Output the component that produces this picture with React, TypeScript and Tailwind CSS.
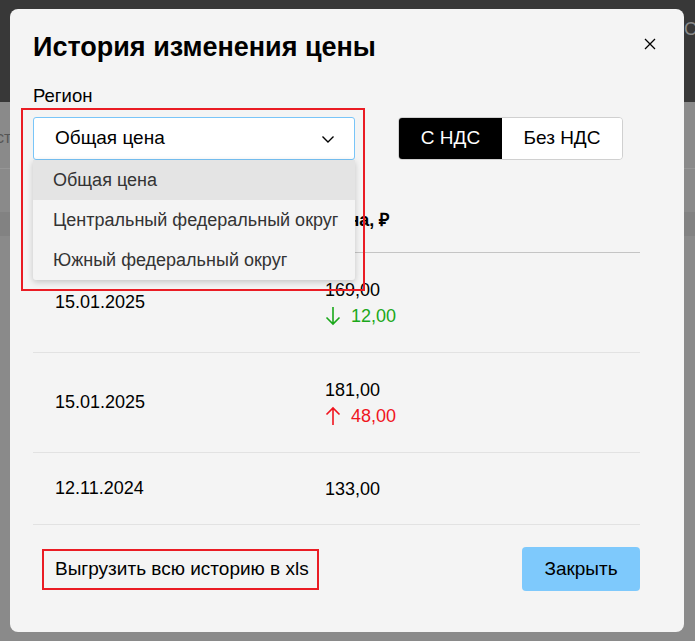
import React from 'react';

const rows = [
  { date: '15.01.2025', price: '169,00', diff: '12,00', dir: 'down' },
  { date: '15.01.2025', price: '181,00', diff: '48,00', dir: 'up' },
  { date: '12.11.2024', price: '133,00' },
];

const regions = ['Общая цена', 'Центральный федеральный округ', 'Южный федеральный округ'];

const Chevron = () => (
  <svg width="16" height="16" viewBox="0 0 16 16" fill="none" stroke="#000" strokeWidth="1.4">
    <path d="M2.5 5.5 8 11l5.5-5.5" />
  </svg>
);

const Arrow = ({ up }: { up: boolean }) => (
  <svg width="16" height="20" viewBox="0 0 16 20" fill="none" stroke="currentColor" strokeWidth="1.6">
    {up ? <path d="M8 19V2M1.5 8.5 8 2l6.5 6.5" /> : <path d="M8 1v17M1.5 11.5 8 18l6.5-6.5" />}
  </svg>
);

const Backdrop = () => (
  <div className="absolute inset-0 flex flex-col">
    <div className="h-[102px] bg-[#383838] relative">
      <span className="absolute left-[684px] top-[16px] text-[18px] text-[#8a8a8a]">С</span>
    </div>
    <div className="flex-1 bg-[#8a8a8a] relative">
      <span className="absolute left-[-4px] top-[24px] text-[16px] text-[#555]">ст</span>
      <div className="absolute left-0 right-0 top-[66px] h-px bg-[#969696]" />
      <div className="absolute left-0 right-0 top-[110px] h-[24px] bg-[#828282]" />
    </div>
  </div>
);

export default function App() {
  return (
    <div className="relative w-[695px] h-[641px] overflow-hidden font-['Liberation_Sans',Arial,sans-serif] text-black">
      <Backdrop />
      <div className="absolute left-[10px] top-[9px] w-[674px] h-[623px] bg-[#f4f4f4] rounded-[8px] pl-[23px] pr-[44px] pt-[22px]">
        <button className="absolute right-[26px] top-[27px] w-[16px] h-[16px] flex items-center justify-center">
          <svg width="12" height="12" viewBox="0 0 12 12" stroke="#000" strokeWidth="1.3">
            <path d="M1 1l10 10M11 1 1 11" />
          </svg>
        </button>
        <h1 className="text-[27px] font-bold leading-[32px]">История изменения цены</h1>
        <div className="mt-[23px] text-[18.5px] leading-[20px]">Регион</div>
        <div className="mt-[11px] flex items-center">
          <div className="relative w-[322px]">
            <div className="h-[43px] bg-white border border-[#79c5f8] rounded-[3px] flex items-center justify-between pl-[21px] pr-[18px] text-[19px]">
              <span>Общая цена</span>
              <Chevron />
            </div>
            <div className="absolute left-0 right-0 top-[43px] bg-[#f4f4f4] shadow-[0_2px_6px_rgba(0,0,0,0.2)] rounded-b-[3px] z-10">
              {regions.map((r, i) => (
                <div key={r} className={`h-[40px] flex items-center pl-[20px] text-[18px] text-[#333] ${i === 0 ? 'bg-[#e4e4e4]' : ''}`}>
                  {r}
                </div>
              ))}
            </div>
            <div className="absolute left-[-12px] top-[-9px] w-[344px] h-[183px] border-2 border-[#ea1c24] z-20 pointer-events-none" />
          </div>
          <div className="ml-[43px] flex h-[43px] rounded-[4px] overflow-hidden border border-[#d0d0d0] text-[19px]">
            <div className="w-[103px] bg-black text-white flex items-center justify-center">С НДС</div>
            <div className="w-[120px] bg-white flex items-center justify-center">Без НДС</div>
          </div>
        </div>
        <div className="mt-[29px]">
          <div className="h-[64px] flex items-center border-b border-[#c4c4c4] text-[18px] font-bold">
            <div className="w-[292px] pl-[22px]">Дата</div>
            <div>Цена, ₽</div>
          </div>
          {rows.map((r, i) => (
            <div key={i} className={`flex items-center border-b border-[#e2e2e2] text-[18px] ${r.diff ? 'h-[100px]' : 'h-[72px]'}`}>
              <div className="w-[292px] pl-[22px]">{r.date}</div>
              <div className="flex flex-col gap-[4px]">
                <span className="leading-[22px]">{r.price}</span>
                {r.diff && (
                  <span className={`flex items-center leading-[22px] ${r.dir === 'down' ? 'text-[#1aa81a]' : 'text-[#f0141e]'}`}>
                    <span className="mr-[10px]"><Arrow up={r.dir === 'up'} /></span>
                    {r.diff}
                  </span>
                )}
              </div>
            </div>
          ))}
        </div>
        <div className="mt-[22px] flex items-center justify-between">
          <div className="ml-[9px] h-[41px] pl-[11px] pr-[8px] border-2 border-[#ea1c24] flex items-center text-[19px]">
            Выгрузить всю историю в xls
          </div>
          <button className="w-[118px] h-[44px] bg-[#7ec9fc] rounded-[4px] text-[19px]">Закрыть</button>
        </div>
      </div>
    </div>
  );
}
